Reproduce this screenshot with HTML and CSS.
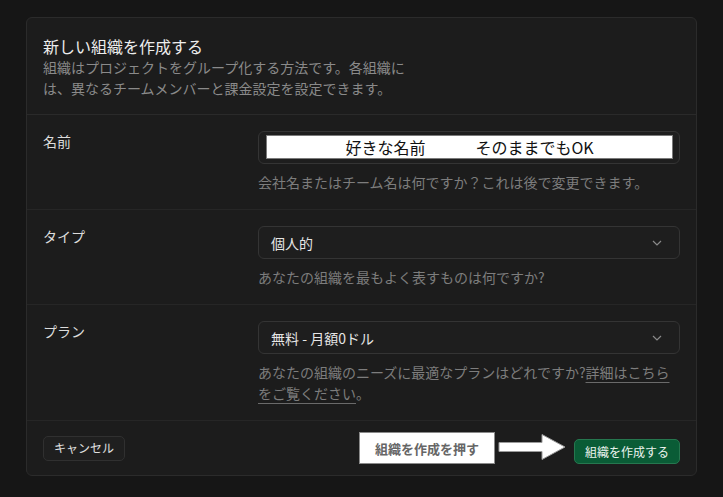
FILE: index.html
```html
<!DOCTYPE html>
<html lang="ja">
<head>
<meta charset="utf-8">
<title>新しい組織を作成する</title>
<link rel="stylesheet" href="styles.css">
</head>
<body>
<div class="card">
  <div class="card-header">
    <h1 class="title">新しい組織を作成する</h1>
    <p class="desc">組織はプロジェクトをグループ化する方法です。各組織には、異なるチームメンバーと課金設定を設定できます。</p>
  </div>

  <div class="row">
    <label class="label">名前</label>
    <div class="control">
      <div class="input">
        <div class="note-box"><span>好きな名前</span><span>そのままでもOK</span></div>
      </div>
      <p class="help">会社名またはチーム名は何ですか？これは後で変更できます。</p>
    </div>
  </div>

  <div class="row">
    <label class="label">タイプ</label>
    <div class="control">
      <div class="select">
        <span>個人的</span>
        <svg class="chev" width="10" height="6" viewBox="0 0 10 6"><path d="M1 1l4 4 4-4" fill="none" stroke="#8a8a8a" stroke-width="1.2"/></svg>
      </div>
      <p class="help">あなたの組織を最もよく表すものは何ですか?</p>
    </div>
  </div>

  <div class="row">
    <label class="label">プラン</label>
    <div class="control">
      <div class="select">
        <span>無料 - 月額0ドル</span>
        <svg class="chev" width="10" height="6" viewBox="0 0 10 6"><path d="M1 1l4 4 4-4" fill="none" stroke="#8a8a8a" stroke-width="1.2"/></svg>
      </div>
      <p class="help">あなたの組織のニーズに最適なプランはどれですか?<a class="link" href="#">詳細はこちらをご覧ください</a>。</p>
    </div>
  </div>

  <div class="footer">
    <button class="btn btn-default">キャンセル</button>
    <div class="actions">
      <div class="callout">組織を作成を押す</div>
      <svg class="arrow" width="70" height="28" viewBox="0 0 70 28"><path d="M1 9.5H44V1.5L67 14L44 26.5V18.5H1Z" fill="#ffffff" stroke="#9a9a9a" stroke-width="1"/></svg>
      <button class="btn btn-primary">組織を作成する</button>
    </div>
  </div>
</div>
</body>
</html>
```

FILE: styles.css
```css
* { box-sizing: border-box; }
html, body { margin: 0; }
body {
  background: #161616;
  padding: 17px 26px;
  font-family: "Noto Sans CJK JP", "Noto Sans", sans-serif;
  color: #e6e6e6;
}
.card {
  background: #1c1c1c;
  border: 1px solid #2b2b2b;
  border-radius: 6px;
}
.card-header {
  padding: 17px 16px 15px;
  border-bottom: 1px solid #2a2a2a;
}
.title {
  margin: 0;
  font-size: 16px;
  line-height: 22px;
  font-weight: 400;
  color: #ededed;
}
.desc {
  margin: 0;
  max-width: 362px;
  font-size: 14px;
  line-height: 21px;
  color: #8a8a8a;
}
.row {
  display: grid;
  grid-template-columns: 199px 1fr;
  column-gap: 16px;
  padding: 16px 16px 16px;
  border-bottom: 1px solid #262626;
}
.label {
  font-size: 14px;
  line-height: 20px;
  color: #dcdcdc;
}
.control { min-width: 0; }
.input, .select {
  height: 33px;
  border: 1px solid #343434;
  border-radius: 6px;
  background: #1e1e1e;
}
.input {
  padding: 3px 6px 4px 7px;
}
.note-box {
  height: 100%;
  background: #ffffff;
  border: 1px solid #7a7a7a;
  display: flex;
  justify-content: center;
  align-items: center;
  gap: 50px;
  font-size: 16px;
  color: #111;
  font-family: "Noto Sans CJK JP", sans-serif;
}
.select {
  display: flex;
  align-items: center;
  justify-content: space-between;
  padding: 0 17px 0 12px;
  font-size: 14px;
  color: #e6e6e6;
}
.chev { display: block; }
.help {
  margin: 8px 0 0;
  font-size: 14px;
  line-height: 21px;
  color: #7d7d7d;
}
.link {
  color: #7d7d7d;
  text-decoration: underline;
  text-decoration-color: #6a6a6a;
  text-underline-offset: 4px;
}
.footer {
  display: flex;
  justify-content: space-between;
  align-items: center;
  padding: 11px 16px 11px;
}
.actions {
  display: flex;
  align-items: flex-end;
}
.btn {
  font-family: "Noto Sans CJK JP", sans-serif;
  font-size: 12px;
  line-height: 16px;
  height: 25px;
  padding: 0 10px;
  border-radius: 5px;
  cursor: pointer;
}
.btn-default {
  background: #1f1f1f;
  border: 1px solid #303030;
  color: #e0e0e0;
}
.btn-primary {
  background: #0a5c36;
  border: 1px solid #26774f;
  color: #eaf3ee;
}
.callout {
  width: 136px;
  height: 32px;
  background: #ffffff;
  border: 1px solid #8a8a8a;
  display: flex;
  align-items: center;
  justify-content: center;
  font-size: 13px;
  font-weight: 700;
  color: #666;
}
.arrow {
  display: block;
  margin: 0 6px 3px 3px;
  align-self: center;
}
```
